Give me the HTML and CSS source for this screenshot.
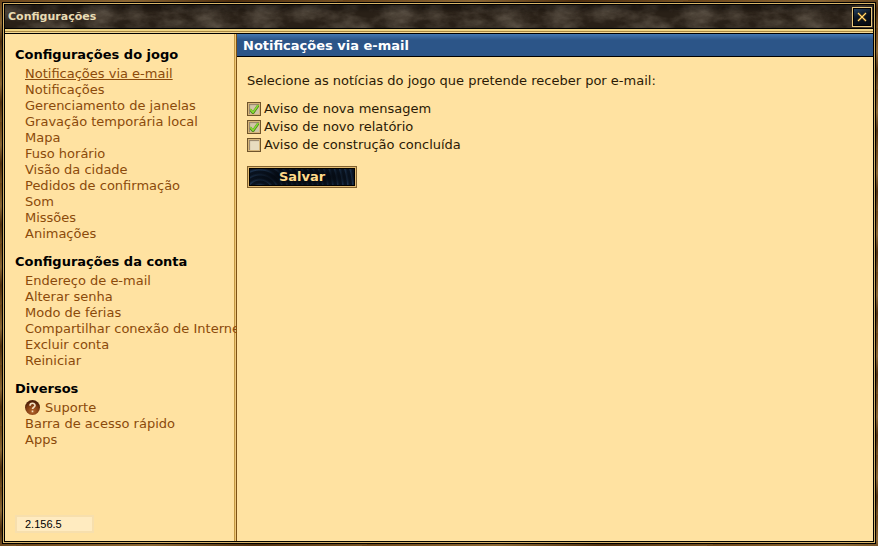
FILE: index.html
```html
<!DOCTYPE html>
<html lang="pt-BR">
<head>
<meta charset="UTF-8">
<meta name="viewport" content="width=device-width, initial-scale=1.0">
<title>Configurações</title>
<link rel="stylesheet" href="styles.css">
</head>
<body>
<div class="window">
    <div class="window-inner">
        <header class="title-bar">
            <h1>Configurações</h1>
            <button type="button" class="close-btn" aria-label="Fechar">
                <svg width="10" height="10" viewBox="0 0 10 10">
                    <path d="M1 1L9 9M9 1L1 9" stroke="#a87d2c" stroke-width="2"/>
                    <path d="M1 1L9 9M9 1L1 9" stroke="#ffd978" stroke-width="1"/>
                </svg>
            </button>
        </header>
        <div class="window-body">
            <nav class="menu">
                <h2>Configurações do jogo</h2>
                <ul>
                    <li><a href="#" class="selected">Notificações via e-mail</a></li>
                    <li><a href="#">Notificações</a></li>
                    <li><a href="#">Gerenciamento de janelas</a></li>
                    <li><a href="#">Gravação temporária local</a></li>
                    <li><a href="#">Mapa</a></li>
                    <li><a href="#">Fuso horário</a></li>
                    <li><a href="#">Visão da cidade</a></li>
                    <li><a href="#">Pedidos de confirmação</a></li>
                    <li><a href="#">Som</a></li>
                    <li><a href="#">Missões</a></li>
                    <li><a href="#">Animações</a></li>
                </ul>
                <h2>Configurações da conta</h2>
                <ul>
                    <li><a href="#">Endereço de e-mail</a></li>
                    <li><a href="#">Alterar senha</a></li>
                    <li><a href="#">Modo de férias</a></li>
                    <li><a href="#">Compartilhar conexão de Internet</a></li>
                    <li><a href="#">Excluir conta</a></li>
                    <li><a href="#">Reiniciar</a></li>
                </ul>
                <h2>Diversos</h2>
                <ul>
                    <li>
                        <a href="#" class="support">
                            <svg width="16" height="16" viewBox="0 0 16 16">
                                <defs>
                                    <radialGradient id="ball" cx="50%" cy="75%" r="65%">
                                        <stop offset="0" stop-color="#b5652a"/>
                                        <stop offset="0.6" stop-color="#853f14"/>
                                        <stop offset="1" stop-color="#4d1f08"/>
                                    </radialGradient>
                                </defs>
                                <circle cx="7.5" cy="7.5" r="7.5" fill="url(#ball)"/>
                                <path d="M5 5.7C5 2.5 10 2.5 10 5.5C10 7.3 7.5 7.2 7.5 9.1M7.5 10.5V12.3" fill="none" stroke="#f3dfc0" stroke-width="1.6"/>
                            </svg>
                            <span>Suporte</span>
                        </a>
                    </li>
                    <li><a href="#">Barra de acesso rápido</a></li>
                    <li><a href="#">Apps</a></li>
                </ul>
                <div class="version">2.156.5</div>
            </nav>
            <main class="content">
                <h2 class="content-title">Notificações via e-mail</h2>
                <form class="settings">
                    <p>Selecione as notícias do jogo que pretende receber por e-mail:</p>
                    <label><input type="checkbox" checked>Aviso de nova mensagem</label>
                    <label><input type="checkbox" checked>Aviso de novo relatório</label>
                    <label><input type="checkbox">Aviso de construção concluída</label>
                    <button type="button" class="save-btn">Salvar</button>
                </form>
            </main>
        </div>
    </div>
</div>
</body>
</html>
```
FILE: styles.css
```css
* {
    box-sizing: border-box;
}

body {
    margin: 0;
    font-family: Verdana, "DejaVu Sans", sans-serif;
    font-size: 13px;
    line-height: 16px;
    color: #2b1a05;
}

h1, h2, p, ul {
    margin: 0;
    padding: 0;
}

/* wooden frame, then black / gold / black lines */
.window {
    display: flex;
    min-height: 100vh;
    padding: 2px;
    background: repeating-linear-gradient(170deg, #6b4519 0, #8a6633 23px, #4f2f0e 41px, #745022 60px);
}

.window-inner {
    flex: 1;
    min-width: 0;
    display: flex;
    flex-direction: column;
    border: 1px solid #000;
    padding: 1px;
    background: #d9b468;
}

/* dark stone with a gold rail along the bottom */
.title-bar {
    display: flex;
    justify-content: space-between;
    align-items: center;
    height: 30px;
    padding: 0 1px 5px 3px;
    border: 1px solid #000;
    background-color: #292017;
    background-image:
        linear-gradient(#000 0 1px, #efd484 1px 3px, #a98843 3px 4px, #f5d993 4px),
        linear-gradient(rgba(0, 0, 0, 0.35), transparent 30%, transparent 75%, rgba(0, 0, 0, 0.3)),
        url("data:image/svg+xml,%3Csvg xmlns='http://www.w3.org/2000/svg' width='300' height='30'%3E%3Cfilter id='n' x='0' y='0' width='1' height='1'%3E%3CfeTurbulence type='fractalNoise' baseFrequency='0.035 0.06' numOctaves='5' seed='4' stitchTiles='stitch'/%3E%3CfeColorMatrix values='0 0 0 0 0.42 0 0 0 0 0.36 0 0 0 0 0.28 0.7 0 0 0 -0.22'/%3E%3C/filter%3E%3Crect width='300' height='30' filter='url(%23n)'/%3E%3C/svg%3E");
    background-size: 100% 5px, 100% 100%, 300px 30px;
    background-position: bottom, top, top left;
    background-repeat: no-repeat, no-repeat, repeat-x;
}

.title-bar h1 {
    font-size: 11px;
    line-height: 16px;
    color: #e9dcb4;
}

.close-btn {
    display: flex;
    align-items: center;
    justify-content: center;
    width: 20px;
    height: 20px;
    padding: 0;
    border: 1px solid #e8c77c;
    box-shadow: inset 0 0 0 1px #000;
    background: linear-gradient(160deg, #2a4a6c, #0b1521 45%, #05090f);
    cursor: pointer;
}

.window-body {
    flex: 1;
    display: flex;
    border: 1px solid #000;
    border-top: 0;
    background: #ffe2a1;
}

/* the divider is a background so long links run over it */
.menu {
    flex: none;
    display: flex;
    flex-direction: column;
    width: 232px;
    padding: 12px 0 8px 10px;
    overflow: hidden;
    background: linear-gradient(90deg, #c49843 0 1px, #efc878 1px 2px, #7d5215 2px) right / 3px 100% no-repeat;
    white-space: nowrap;
}

.menu h2 {
    font-size: 13px;
    line-height: 18px;
    color: #000;
}

.menu ul {
    list-style: none;
    padding: 2px 0 11px 10px;
}

.menu a {
    display: block;
    width: max-content;
    color: #8b4a0b;
    text-decoration: none;
}

.menu a.selected,
.menu a:hover {
    text-decoration: underline;
}

.menu .support {
    display: flex;
    gap: 4px;
}

.version {
    width: 79px;
    margin-top: auto;
    padding: 0 8px;
    border: 2px solid #f7dfad;
    background: #ffebc0;
    font-family: Arial, "Liberation Sans", sans-serif;
    font-size: 11px;
    line-height: 14px;
    color: #000;
}

.content {
    flex: 1;
    min-width: 0;
}

.content-title {
    padding: 3px 6px 1px;
    border-bottom: 1px solid #000;
    background: linear-gradient(#4577b0, #2c5588 6px, #2c5588);
    font-size: 13px;
    line-height: 18px;
    color: #fff;
}

.settings {
    display: flex;
    flex-direction: column;
    align-items: flex-start;
    padding: 16px 10px;
}

.settings p {
    margin-bottom: 11px;
}

.settings label {
    display: flex;
    align-items: center;
    gap: 3px;
    line-height: 18px;
}

.settings input {
    appearance: none;
    width: 14px;
    height: 14px;
    margin: 0;
    border: 1px solid #6f542c;
    box-shadow: inset 0 0 0 1px #d6b67a, inset 1px 1px 1px 1px #94826a;
    background: #e8dcc0 center no-repeat;
}

.settings input:checked {
    background-color: #d2c6a6;
    background-image: url("data:image/svg+xml,%3Csvg xmlns='http://www.w3.org/2000/svg' width='12' height='12'%3E%3Cpath d='M2 6.5L5 10L11 1.5' fill='none' stroke='%234a7a1c' stroke-width='2.6'/%3E%3Cpath d='M2 6L5 9.5L11 1' fill='none' stroke='%2386e030' stroke-width='1.5'/%3E%3C/svg%3E");
}

.save-btn {
    width: 110px;
    height: 22px;
    margin-top: 12px;
    padding: 0;
    border: 1px solid #80602e;
    box-shadow: inset 0 0 0 1px #e0b970, inset 0 0 0 2px #000;
    background:
        radial-gradient(ellipse at center, rgba(4, 9, 16, 0.9) 35%, transparent 80%),
        repeating-radial-gradient(circle at 12px 26px, #0a1422 0 2px, #1d3450 3px, #0a1422 5px);
    font-family: inherit;
    font-size: 13px;
    font-weight: bold;
    line-height: 18px;
    color: #ffd989;
    cursor: pointer;
}
```
